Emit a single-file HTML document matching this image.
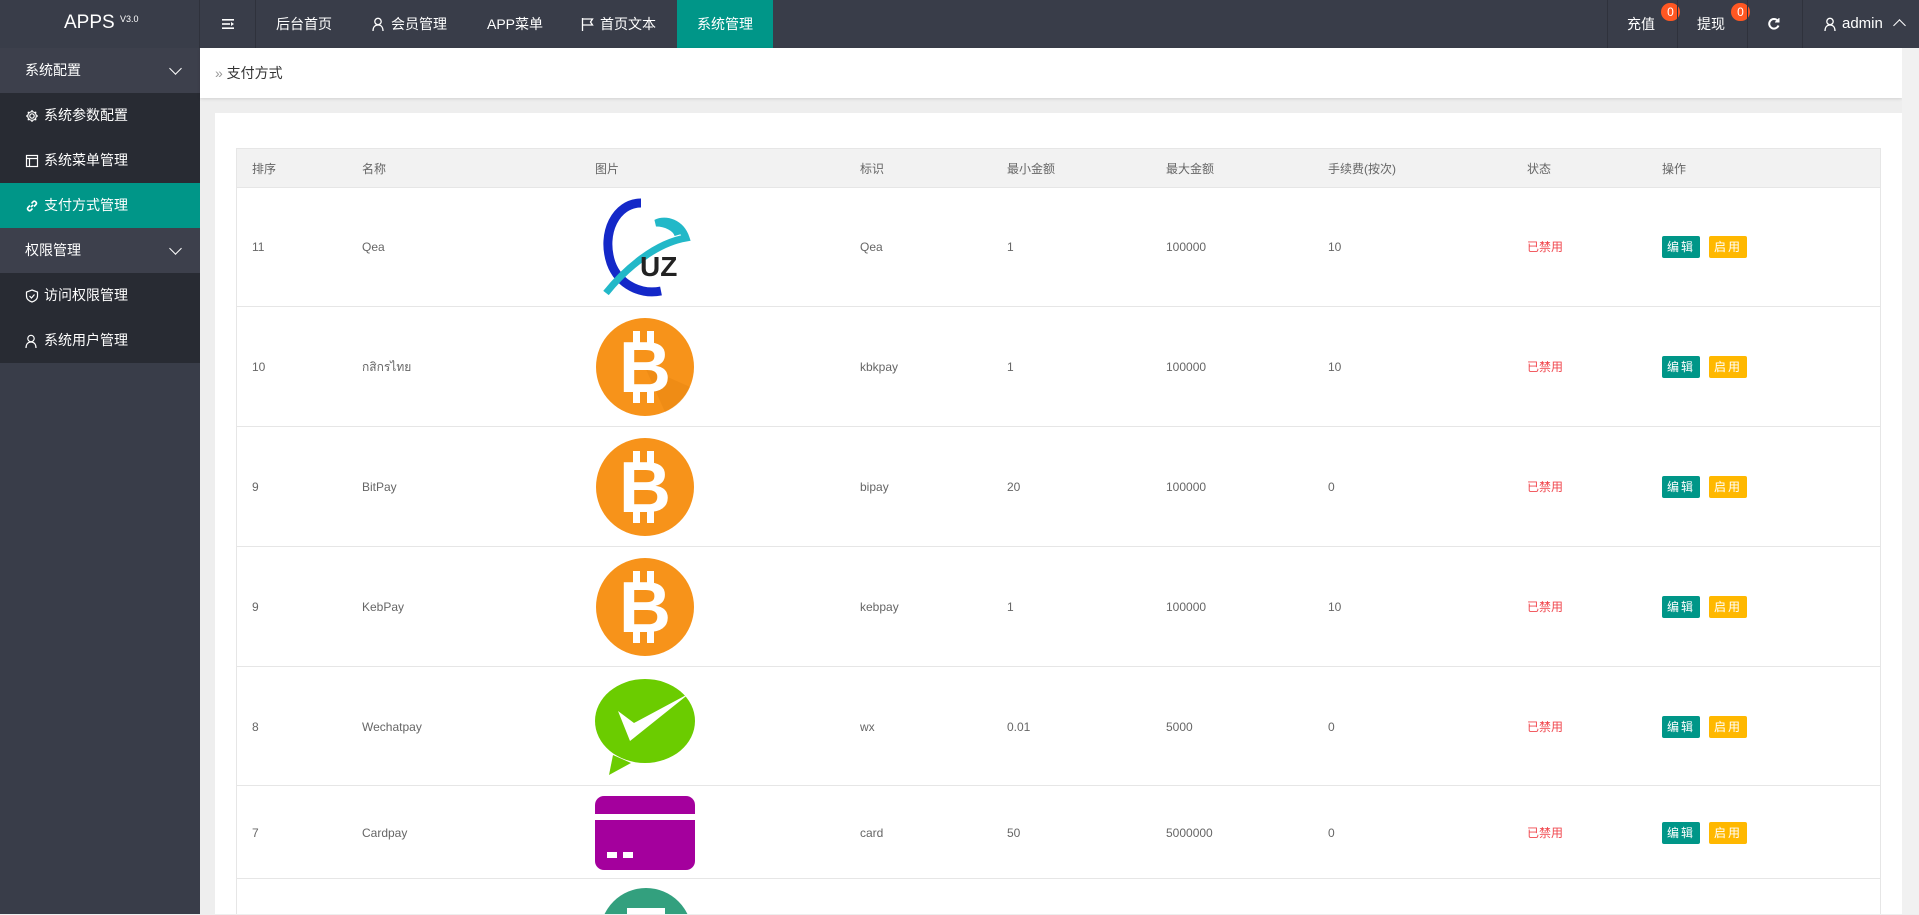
<!DOCTYPE html>
<html><head><meta charset="utf-8"><style>
*{margin:0;padding:0;box-sizing:border-box}
html,body{width:1919px;height:915px;overflow:hidden}
body{background:#eeeeee;font-family:"Liberation Sans","Noto Sans CJK SC",sans-serif;position:relative}
.hd{position:absolute;left:0;top:0;width:1919px;height:48px;background:#393d49;color:#fff;font-size:14px}
.hd .logo{position:absolute;left:64px;top:12px;font-size:19px;color:#fff}
.hd .logo sup{font-size:9px;vertical-align:top;position:relative;top:2px}
.nav{position:absolute;top:0;height:48px;line-height:48px;color:#fff}
.side{position:absolute;left:0;top:48px;width:200px;height:866px;background:#393d49}
.si{height:45px;line-height:45px;color:#fff;font-size:14px;padding-left:25px;position:relative}
.si svg{position:absolute;left:25px;top:16px}
.si .t{position:absolute;left:44px;top:0}
.si.top{background:#3d404c}
.si.sub{background:#282b33}
.si.act{background:#009688}
.chev{position:absolute;right:20px;top:16px;width:9px;height:9px;border-right:1.5px solid #fff;border-bottom:1.5px solid #fff;transform:rotate(45deg)}
.bc{position:absolute;left:200px;top:48px;width:1702px;height:50px;background:#fff;box-shadow:0 1px 3px rgba(0,0,0,.12);font-size:14px;line-height:50px;color:#333;padding-left:15px}
.card{position:absolute;left:215px;top:113px;width:1687px;height:801px;background:#fff}
.sb{position:absolute;left:1902px;top:48px;width:17px;height:866px;background:#f1f1f1}
.tbl{position:absolute;left:236px;top:148px;width:1645px;height:766px;border:1px solid #e6e6e6;border-bottom:none;overflow:hidden}
.th{position:absolute;left:0;top:0;width:100%;height:39px;background:#f2f2f2;border-bottom:1px solid #e6e6e6}
.row{position:absolute;left:0;width:100%;border-bottom:1px solid #e6e6e6}
.c{position:absolute;font-size:12px;line-height:16px;height:16px;color:#666;white-space:nowrap}
.red{color:#f0484f}
.btn{position:absolute;height:22px;line-height:22px;font-size:12px;color:#fff;padding:0 5px;border-radius:2px;letter-spacing:2px}
.badge{position:absolute;top:3px;width:19px;height:18px;border-radius:9px;background:#ff5722;color:#fff;font-size:12px;line-height:18px;text-align:center}
.vb{position:absolute;top:0;width:1px;height:48px;background:#2f323c}
</style></head><body>
<div class="hd">
<div class="logo">APPS <sup>V3.0</sup></div>
<div class="vb" style="left:199px"></div>
<svg style="position:absolute;left:221px;top:17px" width="14" height="14" viewBox="0 0 14 14" fill="#fff"><rect x="1" y="2" width="12" height="1.6"/><rect x="1" y="6.2" width="8" height="1.6"/><rect x="1" y="10.4" width="12" height="1.6"/><path d="M10 5l3 2-3 2z"/></svg>
<div class="vb" style="left:255px"></div>
<div class="nav" style="left:276px">后台首页</div>
<svg style="position:absolute;left:372px;top:17px" width="12" height="14" viewBox="0 0 12 14" fill="none" stroke="#fff" stroke-width="1.3"><circle cx="6" cy="4.5" r="3.2"/><path d="M1 14c0-4 2-6 5-6s5 2 5 6"/></svg>
<div class="nav" style="left:391px">会员管理</div>
<div class="nav" style="left:487px">APP菜单</div>
<svg style="position:absolute;left:581px;top:17px" width="14" height="14" viewBox="0 0 14 14" fill="none" stroke="#fff" stroke-width="1.3"><path d="M1.5 1v13M1.5 2h10l-2 3 2 3h-10"/></svg>
<div class="nav" style="left:600px">首页文本</div>
<div style="position:absolute;left:677px;top:0;width:96px;height:48px;background:#009688"></div>
<div class="nav" style="left:697px">系统管理</div>
<div class="vb" style="left:1607px"></div>
<div class="nav" style="left:1627px">充值</div>
<div class="badge" style="left:1661px">0</div>
<div class="vb" style="left:1677px"></div>
<div class="nav" style="left:1697px">提现</div>
<div class="badge" style="left:1731px">0</div>
<div class="vb" style="left:1747px"></div>
<svg style="position:absolute;left:1767px;top:17px" width="14" height="14" viewBox="0 0 14 14" fill="none" stroke="#fff" stroke-width="2"><path d="M11.5 8.5A4.8 4.8 0 1 1 10.5 3.5"/><path d="M12 1v4H8" fill="#fff" stroke-width="1"/></svg>
<div class="vb" style="left:1802px"></div>
<svg style="position:absolute;left:1824px;top:17px" width="12" height="14" viewBox="0 0 12 14" fill="none" stroke="#fff" stroke-width="1.3"><circle cx="6" cy="4.5" r="3.2"/><path d="M1 14c0-4 2-6 5-6s5 2 5 6"/></svg>
<div class="nav" style="left:1842px;font-size:15px">admin</div>
<div style="position:absolute;left:1895px;top:21px;width:9px;height:9px;border-left:1.5px solid #fff;border-top:1.5px solid #fff;transform:rotate(45deg)"></div>
</div>
<div class="side">
<div class="si top">系统配置<span class="chev"></span></div>
<div class="si sub"><svg width="14" height="14" viewBox="0 0 14 14" fill="none" stroke="#fff" stroke-width="1.2"><circle cx="7" cy="7" r="2.2"/><path d="M7 1v2M7 11v2M1 7h2M11 7h2M2.8 2.8l1.4 1.4M9.8 9.8l1.4 1.4M2.8 11.2l1.4-1.4M9.8 4.2l1.4-1.4"/><circle cx="7" cy="7" r="4.3"/></svg><span class="t">系统参数配置</span></div>
<div class="si sub"><svg width="14" height="14" viewBox="0 0 14 14" fill="none" stroke="#fff" stroke-width="1.2"><rect x="1.5" y="1.5" width="11" height="11"/><path d="M1.5 4.5h11M4.5 4.5v8"/></svg><span class="t">系统菜单管理</span></div>
<div class="si act"><svg width="14" height="14" viewBox="0 0 14 14" fill="none" stroke="#fff" stroke-width="1.6"><path d="M6 8l2-2M5 6.5L3 8.5a2 2 0 0 0 2.8 2.8L7.5 9.5M9 7.5l2-2A2 2 0 0 0 8.2 2.7L6.5 4.5"/></svg><span class="t">支付方式管理</span></div>
<div class="si top">权限管理<span class="chev"></span></div>
<div class="si sub"><svg width="14" height="14" viewBox="0 0 14 14" fill="none" stroke="#fff" stroke-width="1.2"><path d="M7 1l5.5 2v4c0 3-2.5 5.2-5.5 6C4 12.2 1.5 10 1.5 7V3z"/><path d="M4.5 7l2 2 3-3.5"/></svg><span class="t">访问权限管理</span></div>
<div class="si sub"><svg width="12" height="14" viewBox="0 0 12 14" fill="none" stroke="#fff" stroke-width="1.2"><circle cx="6" cy="4.5" r="3.2"/><path d="M1 14c0-4 2-6 5-6s5 2 5 6"/></svg><span class="t">系统用户管理</span></div>
</div>
<div class="bc"><span style="color:#999">»</span> 支付方式</div>
<div class="card"></div>
<div class="sb"></div>
<div class="tbl">
<div class="th">
<span class="c" style="left:15px;top:12px">排序</span><span class="c" style="left:125px;top:12px">名称</span><span class="c" style="left:358px;top:12px">图片</span><span class="c" style="left:623px;top:12px">标识</span><span class="c" style="left:770px;top:12px">最小金额</span><span class="c" style="left:929px;top:12px">最大金额</span><span class="c" style="left:1091px;top:12px">手续费(按次)</span><span class="c" style="left:1290px;top:12px">状态</span><span class="c" style="left:1425px;top:12px">操作</span>
</div>
<div class="row" style="top:39px;height:119px">
<span class="c" style="left:15px;top:51px">11</span><span class="c" style="left:125px;top:51px">Qea</span><span class="c" style="left:623px;top:51px">Qea</span><span class="c" style="left:770px;top:51px">1</span><span class="c" style="left:929px;top:51px">100000</span><span class="c" style="left:1091px;top:51px">10</span><span class="c red" style="left:1290px;top:51px">已禁用</span>
<span class="btn" style="left:1425px;top:48px;background:#009688">编辑</span><span class="btn" style="left:1472px;top:48px;background:#ffb800">启用</span>
<svg style="position:absolute;left:359px;top:10px" width="100" height="100" viewBox="0 0 100 100"><path d="M45 5C20 5 5 35 15 65c8 22 30 32 50 28" fill="none" stroke="#1428c8" stroke-width="9"/><path d="M10 95c20-25 50-50 80-55-5-15-20-20-30-15 10 0 20 5 22 12" fill="none" stroke="#22b8c8" stroke-width="7"/><text x="44" y="78" font-size="28" font-family="Liberation Sans" font-weight="bold" fill="#222">UZ</text></svg>
</div>
<div class="row" style="top:158px;height:120px">
<span class="c" style="left:15px;top:52px">10</span><span class="c" style="left:125px;top:52px">กสิกรไทย</span><span class="c" style="left:623px;top:52px">kbkpay</span><span class="c" style="left:770px;top:52px">1</span><span class="c" style="left:929px;top:52px">100000</span><span class="c" style="left:1091px;top:52px">10</span><span class="c red" style="left:1290px;top:52px">已禁用</span>
<span class="btn" style="left:1425px;top:49px;background:#009688">编辑</span><span class="btn" style="left:1472px;top:49px;background:#ffb800">启用</span>
<svg style="position:absolute;left:358px;top:10px" width="100" height="100" viewBox="0 0 100 100"><circle cx="50" cy="50" r="49" fill="#f7931a"/><path d="M50 50L95 70A49 49 0 0 1 70 95z" fill="#e8850f" opacity=".5"/><text x="50" y="75" text-anchor="middle" font-size="72" font-weight="bold" font-family="Liberation Sans" fill="#fff">B</text><rect x="38" y="14" width="7" height="12" fill="#fff"/><rect x="52" y="14" width="7" height="12" fill="#fff"/><rect x="38" y="74" width="7" height="12" fill="#fff"/><rect x="52" y="74" width="7" height="12" fill="#fff"/></svg>
</div>
<div class="row" style="top:278px;height:120px">
<span class="c" style="left:15px;top:52px">9</span><span class="c" style="left:125px;top:52px">BitPay</span><span class="c" style="left:623px;top:52px">bipay</span><span class="c" style="left:770px;top:52px">20</span><span class="c" style="left:929px;top:52px">100000</span><span class="c" style="left:1091px;top:52px">0</span><span class="c red" style="left:1290px;top:52px">已禁用</span>
<span class="btn" style="left:1425px;top:49px;background:#009688">编辑</span><span class="btn" style="left:1472px;top:49px;background:#ffb800">启用</span>
<svg style="position:absolute;left:358px;top:10px" width="100" height="100" viewBox="0 0 100 100"><circle cx="50" cy="50" r="49" fill="#f7931a"/><text x="50" y="75" text-anchor="middle" font-size="72" font-weight="bold" font-family="Liberation Sans" fill="#fff">B</text><rect x="38" y="14" width="7" height="12" fill="#fff"/><rect x="52" y="14" width="7" height="12" fill="#fff"/><rect x="38" y="74" width="7" height="12" fill="#fff"/><rect x="52" y="74" width="7" height="12" fill="#fff"/></svg>
</div>
<div class="row" style="top:398px;height:120px">
<span class="c" style="left:15px;top:52px">9</span><span class="c" style="left:125px;top:52px">KebPay</span><span class="c" style="left:623px;top:52px">kebpay</span><span class="c" style="left:770px;top:52px">1</span><span class="c" style="left:929px;top:52px">100000</span><span class="c" style="left:1091px;top:52px">10</span><span class="c red" style="left:1290px;top:52px">已禁用</span>
<span class="btn" style="left:1425px;top:49px;background:#009688">编辑</span><span class="btn" style="left:1472px;top:49px;background:#ffb800">启用</span>
<svg style="position:absolute;left:358px;top:10px" width="100" height="100" viewBox="0 0 100 100"><circle cx="50" cy="50" r="49" fill="#f7931a"/><text x="50" y="75" text-anchor="middle" font-size="72" font-weight="bold" font-family="Liberation Sans" fill="#fff">B</text><rect x="38" y="14" width="7" height="12" fill="#fff"/><rect x="52" y="14" width="7" height="12" fill="#fff"/><rect x="38" y="74" width="7" height="12" fill="#fff"/><rect x="52" y="74" width="7" height="12" fill="#fff"/></svg>
</div>
<div class="row" style="top:518px;height:119px">
<span class="c" style="left:15px;top:52px">8</span><span class="c" style="left:125px;top:52px">Wechatpay</span><span class="c" style="left:623px;top:52px">wx</span><span class="c" style="left:770px;top:52px">0.01</span><span class="c" style="left:929px;top:52px">5000</span><span class="c" style="left:1091px;top:52px">0</span><span class="c red" style="left:1290px;top:52px">已禁用</span>
<span class="btn" style="left:1425px;top:49px;background:#009688">编辑</span><span class="btn" style="left:1472px;top:49px;background:#ffb800">启用</span>
<svg style="position:absolute;left:358px;top:10px" width="100" height="100" viewBox="0 0 100 100"><ellipse cx="50" cy="44" rx="50" ry="42" fill="#6bcc00"/><path d="M18 78l-4 20 22-12z" fill="#6bcc00"/><path d="M23 34l12 30 60-48-56 30z" fill="#fff"/></svg>
</div>
<div class="row" style="top:637px;height:93px">
<span class="c" style="left:15px;top:39px">7</span><span class="c" style="left:125px;top:39px">Cardpay</span><span class="c" style="left:623px;top:39px">card</span><span class="c" style="left:770px;top:39px">50</span><span class="c" style="left:929px;top:39px">5000000</span><span class="c" style="left:1091px;top:39px">0</span><span class="c red" style="left:1290px;top:39px">已禁用</span>
<span class="btn" style="left:1425px;top:36px;background:#009688">编辑</span><span class="btn" style="left:1472px;top:36px;background:#ffb800">启用</span>
<svg style="position:absolute;left:358px;top:10px" width="100" height="74" viewBox="0 0 100 74"><rect x="0" y="0" width="100" height="74" rx="9" fill="#a4009d"/><rect x="0" y="18" width="100" height="6" fill="#fff"/><rect x="12" y="56" width="10" height="6" fill="#fff"/><rect x="28" y="56" width="10" height="6" fill="#fff"/></svg>
</div>
<div class="row" style="top:730px;height:36px;border-bottom:none;overflow:hidden">
<svg style="position:absolute;left:363px;top:9px" width="92" height="27" viewBox="0 0 92 27"><ellipse cx="46" cy="46" rx="46" ry="46" fill="#33a07e"/><rect x="27" y="20" width="38" height="20" fill="#fff"/></svg>
</div>
</div>
</body></html>
